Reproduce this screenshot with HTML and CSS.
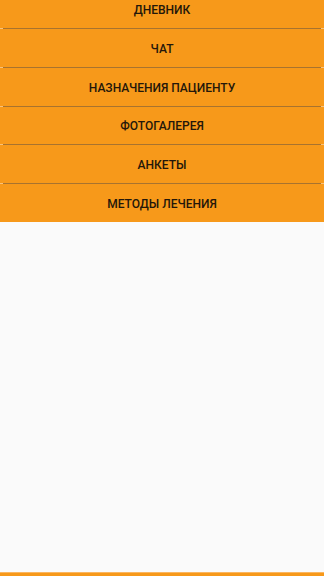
FILE: index.html
```html
<!DOCTYPE html>
<html lang="ru">
<head>
    <meta charset="UTF-8">
    <meta name="viewport" content="width=device-width, initial-scale=1.0">
    <title>Меню пациента</title>
    <link rel="stylesheet" href="styles.css">
</head>
<body>
    <div class="screen">
        <!-- Menu list -->
        <nav class="menu">
            <a href="#" class="menu-item">Дневник</a>
            <a href="#" class="menu-item">Чат</a>
            <a href="#" class="menu-item">Назначения пациенту</a>
            <a href="#" class="menu-item">Фотогалерея</a>
            <a href="#" class="menu-item">Анкеты</a>
            <a href="#" class="menu-item">Методы лечения</a>
        </nav>

        <div class="content"></div>

        <div class="bottom-bar"></div>
    </div>
</body>
</html>
```

FILE: styles.css
```css
/* Basic styles */
*, *::before, *::after {
    box-sizing: border-box;
    margin: 0;
    padding: 0;
}

html, body {
    height: 100%;
}

body {
    font-family: Roboto, "Noto Sans", "Liberation Sans", sans-serif;
    background-color: #FAFAFA;
    overflow: hidden;
}

.screen {
    height: 100vh;
    display: flex;
    flex-direction: column;
}

.menu {
    display: flex;
    flex-direction: column;
    margin-top: -9.75px;
    background-color: #F7991A;
}

.menu-item {
    position: relative;
    display: flex;
    align-items: center;
    justify-content: center;
    height: 38.75px;
    padding-top: 2px;
    color: #24170A;
    font-size: 12px;
    font-weight: 500;
    text-transform: uppercase;
    text-decoration: none;
    border-bottom: 1px solid #A8732F;
}

/* lighter ends of the divider */
.menu-item::after {
    content: "";
    position: absolute;
    left: 0;
    right: 0;
    bottom: -1px;
    height: 1px;
    border-left: 3px solid #F9C27A;
    border-right: 3px solid #F9C27A;
}

.menu-item:last-child {
    border-bottom: none;
    height: 37.75px;
}

.menu-item:last-child::after {
    display: none;
}

.content {
    flex: 1;
}

.bottom-bar {
    height: 4px;
    background-color: #F7991A;
    border-top: 1px solid #FBB660;
}
```
